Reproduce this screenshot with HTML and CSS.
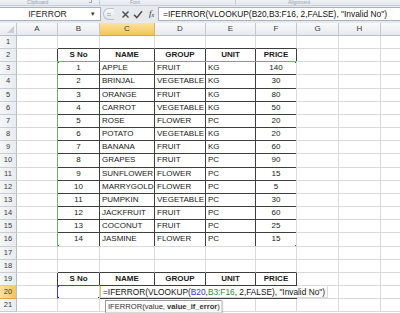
FILE: index.html
```html
<!DOCTYPE html>
<html>
<head>
<meta charset="utf-8">
<title>IFERROR VLOOKUP</title>
<link rel="stylesheet" href="styles.css">
</head>
<body>
<div class="app">
  <div class="ribbon">
    <div class="rgroup g1"><span class="rl">Clipboard</span><span class="launch"></span></div>
    <div class="rgroup g2"><span class="rl">Font</span></div>
    <div class="rgroup g3"><span class="rl">Alignment</span></div>
  </div>
  <div class="fbar">
    <div class="namebox"><span class="nbtext">IFERROR</span><span class="nbarrow">&#9662;</span></div>
    <div class="btns">
      <span class="pill"><span class="pilldot"></span></span>
      <svg class="ico" width="9" height="9" viewBox="0 0 9 9"><path d="M1.5 1.5 L7.5 7.5 M7.5 1.5 L1.5 7.5" stroke="#4a4a4a" stroke-width="1.4" fill="none"/></svg>
      <svg class="ico" width="10" height="9" viewBox="0 0 10 9"><path d="M1 4.8 L3.8 7.6 L9 1.2" stroke="#4a4a4a" stroke-width="1.5" fill="none"/></svg>
      <span class="fx"><i>f</i><sub>x</sub></span>
    </div>
    <div class="finput">=IFERROR(VLOOKUP(B20,B3:F16, 2,FALSE), "Invalid No")</div>
  </div>
  <div class="sheet">
    <div class="corner"><span class="tri"></span></div><div class="h">A</div><div class="h">B</div><div class="h hact">C</div><div class="h">D</div><div class="h">E</div><div class="h">F</div><div class="h">G</div><div class="h">H</div><div class="h"></div>

    <div class="rh">1</div><div></div><div class="tt"></div><div class="tt"></div><div class="tt"></div><div class="tt"></div><div class="tt"></div><div></div><div></div><div></div>

    <div class="rh">2</div><div class="tl"></div><div class="t c b">S No</div><div class="t c b">NAME</div><div class="t c b">GROUP</div><div class="t c b">UNIT</div><div class="t c b">PRICE</div><div></div><div></div><div></div>

    <div class="rh">3</div><div class="tl"></div><div class="t c">1</div><div class="t">APPLE</div><div class="t">FRUIT</div><div class="t">KG</div><div class="t c">140</div><div></div><div></div><div></div>
    <div class="rh">4</div><div class="tl"></div><div class="t c">2</div><div class="t">BRINJAL</div><div class="t">VEGETABLE</div><div class="t">KG</div><div class="t c">30</div><div></div><div></div><div></div>
    <div class="rh">5</div><div class="tl"></div><div class="t c">3</div><div class="t">ORANGE</div><div class="t">FRUIT</div><div class="t">KG</div><div class="t c">80</div><div></div><div></div><div></div>
    <div class="rh">6</div><div class="tl"></div><div class="t c">4</div><div class="t">CARROT</div><div class="t">VEGETABLE</div><div class="t">KG</div><div class="t c">50</div><div></div><div></div><div></div>
    <div class="rh">7</div><div class="tl"></div><div class="t c">5</div><div class="t">ROSE</div><div class="t">FLOWER</div><div class="t">PC</div><div class="t c">20</div><div></div><div></div><div></div>
    <div class="rh">8</div><div class="tl"></div><div class="t c">6</div><div class="t">POTATO</div><div class="t">VEGETABLE</div><div class="t">KG</div><div class="t c">20</div><div></div><div></div><div></div>
    <div class="rh">9</div><div class="tl"></div><div class="t c">7</div><div class="t">BANANA</div><div class="t">FRUIT</div><div class="t">KG</div><div class="t c">60</div><div></div><div></div><div></div>
    <div class="rh">10</div><div class="tl"></div><div class="t c">8</div><div class="t">GRAPES</div><div class="t">FRUIT</div><div class="t">PC</div><div class="t c">90</div><div></div><div></div><div></div>
    <div class="rh">11</div><div class="tl"></div><div class="t c">9</div><div class="t">SUNFLOWER</div><div class="t">FLOWER</div><div class="t">PC</div><div class="t c">15</div><div></div><div></div><div></div>
    <div class="rh">12</div><div class="tl"></div><div class="t c">10</div><div class="t">MARRYGOLD</div><div class="t">FLOWER</div><div class="t">PC</div><div class="t c">5</div><div></div><div></div><div></div>
    <div class="rh">13</div><div class="tl"></div><div class="t c">11</div><div class="t">PUMPKIN</div><div class="t">VEGETABLE</div><div class="t">PC</div><div class="t c">30</div><div></div><div></div><div></div>
    <div class="rh">14</div><div class="tl"></div><div class="t c">12</div><div class="t">JACKFRUIT</div><div class="t">FRUIT</div><div class="t">PC</div><div class="t c">60</div><div></div><div></div><div></div>
    <div class="rh">15</div><div class="tl"></div><div class="t c">13</div><div class="t">COCONUT</div><div class="t">FRUIT</div><div class="t">PC</div><div class="t c">25</div><div></div><div></div><div></div>
    <div class="rh">16</div><div class="tl"></div><div class="t c">14</div><div class="t">JASMINE</div><div class="t">FLOWER</div><div class="t">PC</div><div class="t c">15</div><div></div><div></div><div></div>

    <div class="rh">17</div><div></div><div></div><div></div><div></div><div></div><div></div><div></div><div></div><div></div>
    <div class="rh">18</div><div></div><div class="tt"></div><div class="tt"></div><div class="tt"></div><div class="tt"></div><div class="tt"></div><div></div><div></div><div></div>
    <div class="rh">19</div><div class="tl"></div><div class="t c b">S No</div><div class="t c b">NAME</div><div class="t c b">GROUP</div><div class="t c b">UNIT</div><div class="t c b">PRICE</div><div></div><div></div><div></div>
    <div class="rh rhact">20</div><div class="tl"></div><div class="t"></div><div class="t"></div><div class="t"></div><div class="t"></div><div class="t"></div><div></div><div></div><div></div>
    <div class="rh">21</div><div></div><div></div><div></div><div></div><div></div><div></div><div></div><div></div><div></div>

    <div class="refgreen"><span class="hd tlh"></span><span class="hd trh"></span><span class="hd blh"></span><span class="hd brh"></span></div>
    <div class="refblue"><span class="hd tlh"></span><span class="hd blh"></span><span class="hd brh"></span></div>
    <div class="editor">=IFERROR(VLOOKUP(<span class="rb">B20</span>,<span class="rg">B3:F16</span>, 2,FALSE), "Invalid No")</div>
    <div class="tip">IFERROR(value, <b>value_if_error</b>)</div>
  </div>
</div>
</body>
</html>
```

FILE: styles.css
```css
* {
  box-sizing: border-box;
  margin: 0;
  padding: 0;
}

body {
  width: 400px;
  height: 313px;
  overflow: hidden;
  background: #ffffff;
  font-family: "Liberation Sans", Arial, sans-serif;
}

.app {
  width: 400px;
  height: 313px;
  overflow: hidden;
}

/* ribbon stub */
.ribbon {
  height: 6px;
  display: flex;
  overflow: hidden;
  background: linear-gradient(#eef1f5, #e4e9ef);
  border-bottom: 1px solid #c9d0d8;
}

.rgroup {
  position: relative;
  display: flex;
  align-items: center;
  border-right: 1px solid #c7ced6;
  height: 5px;
}

.g1 { width: 100px; padding-left: 27px; }
.g2 { width: 136px; padding-left: 30px; }
.g3 { width: 150px; padding-left: 52px; border-right: none; }

.rl {
  font-size: 5px;
  line-height: 5px;
  color: #98a2b0;
}

.launch {
  position: absolute;
  right: 7px;
  top: 0;
  width: 3px;
  height: 3px;
  border-right: 1px solid #98a2b0;
  border-bottom: 1px solid #98a2b0;
}

/* formula bar */
.fbar {
  height: 17px;
  display: flex;
  padding-top: 1px;
  background: #e6eaef;
}

.namebox {
  width: 101px;
  height: 14px;
  display: flex;
  align-items: center;
  background: #ffffff;
  border: 1px solid #a9b1bc;
  border-left: none;
  font-size: 8.6px;
  color: #1e1e1e;
}

.nbtext {
  flex: 1;
  text-align: center;
  padding-left: 4px;
}

.nbarrow {
  width: 9px;
  font-size: 7px;
  color: #3c3c3c;
}

.btns {
  width: 57px;
  height: 14px;
  display: flex;
  align-items: center;
  gap: 3px;
  padding-left: 2px;
}

.pill {
  width: 11px;
  height: 12px;
  border-radius: 6px 0 0 6px;
  border: 1px solid #b9c1cb;
  border-right: none;
  background: linear-gradient(#f7f8fa, #e2e6eb);
  display: flex;
  align-items: center;
  justify-content: center;
  margin-right: 4px;
}

.pilldot {
  width: 4px;
  height: 3px;
  border-top: 1px solid #b4bcc6;
  border-bottom: 1px solid #b4bcc6;
}

.ico {
  display: block;
}

.fx {
  font-family: "Liberation Serif", serif;
  font-size: 9px;
  color: #2b2b2b;
  margin-left: 3px;
  line-height: 10px;
}

.fx sub {
  font-size: 6px;
  font-style: italic;
  vertical-align: -1px;
}

.finput {
  flex: 1;
  height: 14px;
  background: #ffffff;
  border: 1px solid #a9b1bc;
  border-right: none;
  font-size: 8.4px;
  line-height: 12px;
  padding-left: 4px;
  white-space: nowrap;
  color: #111111;
}

/* sheet */
.sheet {
  position: relative;
  display: grid;
  grid-template-columns: 17px 41px 42px 55px 51px 50px 41px 42px 42px 42px;
  grid-template-rows: 13px repeat(21, 13.17px);
  font-size: 8px;
  color: #1a1a1a;
}

.sheet > div {
  border-right: 1px solid #dadada;
  border-bottom: 1px solid #dadada;
  white-space: nowrap;
  overflow: hidden;
  line-height: 12px;
  padding: 0 2px;
}

.sheet > .h,
.sheet > .corner {
  background: linear-gradient(#f8f9fa, #e7eaee);
  border-right-color: #c4c9cf;
  border-bottom-color: #b9bfc6;
  text-align: center;
  color: #3a3a3a;
  font-size: 8px;
}

.sheet > .corner {
  position: relative;
}

.tri {
  position: absolute;
  right: 2px;
  bottom: 2px;
  width: 0;
  height: 0;
  border-left: 7px solid transparent;
  border-bottom: 7px solid #c9ced5;
}

.sheet > .hact {
  background: linear-gradient(#fbe3a0, #f2c554);
  border-bottom-color: #e0a43a;
  border-right-color: #d9b265;
}

.sheet > .rh {
  background: linear-gradient(90deg, #f5f6f8, #e8ebef);
  border-right-color: #b9bfc6;
  border-bottom-color: #c8cdd3;
  text-align: center;
  font-size: 7.5px;
  color: #3a3a3a;
  padding: 0;
}

.sheet > .rhact {
  background: linear-gradient(90deg, #fbe0a0, #f2c65a);
  border-bottom-color: #dca74a;
}

.sheet > .t {
  border-right-color: #3e3e3e;
  border-bottom-color: #3e3e3e;
}

.sheet > .tl {
  border-right-color: #3e3e3e;
}

.sheet > .tt {
  border-bottom-color: #3e3e3e;
}

.sheet > .c {
  text-align: center;
}

.sheet > .b {
  font-weight: bold;
}

/* formula reference highlights */
.refgreen {
  position: absolute;
  left: 57px;
  top: 38.3px;
  width: 240px;
  height: 185.4px;
  border: 1px solid #6fb06a;
}

.refblue {
  position: absolute;
  left: 57px;
  top: 262.2px;
  width: 43px;
  height: 14.2px;
  border: 1px solid #3d3dee;
}

.hd {
  position: absolute;
  width: 3px;
  height: 3px;
}

.refgreen .hd { background: #1b8a1b; }
.refblue .hd { background: #1a1adc; }

.tlh { left: -2px; top: -2px; }
.trh { right: -2px; top: -2px; }
.blh { left: -2px; bottom: -2px; }
.brh { right: -2px; bottom: -2px; }

.editor {
  position: absolute;
  left: 100px;
  top: 263.2px;
  height: 12.2px;
  padding: 0 3px 0 2px;
  background: #ffffff;
  border-left: 1px solid #d8c95a;
  font-size: 8.3px;
  line-height: 12px;
  white-space: nowrap;
  color: #111111;
}

.rb { color: #2e2ee6; }
.rg { color: #2f8a3c; }

.tip {
  position: absolute;
  left: 105px;
  top: 277px;
  width: 117px;
  height: 13px;
  background: #fbfbfb;
  border: 1px solid #9a9a9a;
  box-shadow: 1px 1px 1px rgba(0, 0, 0, 0.2);
  font-size: 7.6px;
  line-height: 11px;
  padding-left: 3px;
  white-space: nowrap;
  color: #333333;
}

.tip b {
  font-weight: bold;
}
```
